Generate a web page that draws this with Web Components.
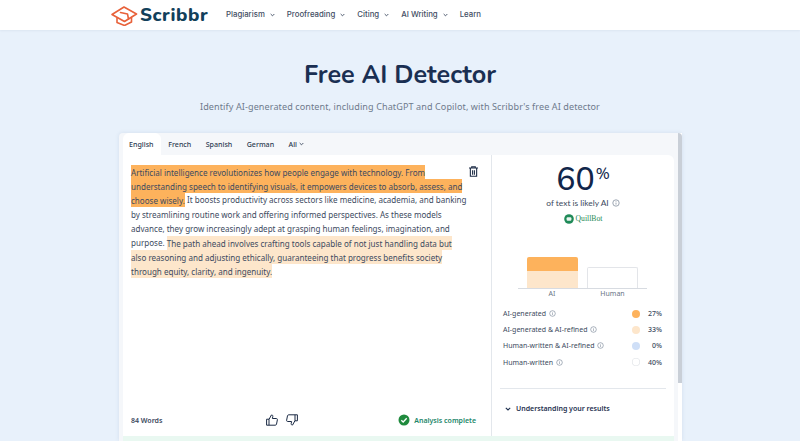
<!DOCTYPE html>
<html>
<head>
<meta charset="utf-8">
<title>Free AI Detector</title>
<style>
  html, body { margin: 0; height: 441px; overflow: hidden; background: #e8f1fb; font-family: "Open Sans", sans-serif; }
</style>
</head>
<body>
<site-header></site-header>
<detector-page></detector-page>

<script>
const infoIcon = (size) => `<svg width="${size}" height="${size}" viewBox="0 0 12 12" fill="none" stroke="#6c7a8d" stroke-width="1"><circle cx="6" cy="6" r="4.8"/><path d="M6 5.4v3M6 3.4v1"/></svg>`;

class SiteHeader extends HTMLElement {
    constructor() {
        super();
        this.attachShadow({ mode: 'open' });
    }
    connectedCallback() {
        const links = [['Plagiarism', 1], ['Proofreading', 1], ['Citing', 1], ['AI Writing', 1], ['Learn', 0]];
        this.shadowRoot.innerHTML = `
            <style>
                :host { display: flex; align-items: center; height: 30px; background: #fff; padding-left: 111px; box-sizing: border-box; box-shadow: 0 1px 2px rgba(30,50,80,.06); position: relative; }
                .logo { display: flex; align-items: center; gap: 2px; width: 115px; }
                .word { font: 800 18.7px/1 "Nunito", "Lato", sans-serif; color: #12405a; letter-spacing: .6px; }
                nav { display: flex; gap: 12px; font: 500 7.8px/1 Inter, sans-serif; color: #3f4d63; }
                a { display: flex; align-items: center; gap: 5px; }
            </style>
            <div class="logo">
                <svg width="27" height="21" viewBox="0 0 27 21" fill="none" stroke="#e8613a" stroke-width="1.6" stroke-linejoin="round" stroke-linecap="round">
                    <path d="M1 9.5 13 2l12.5 7-12 7.5z"/>
                    <path d="M6 13v4.500l7.500 3 7-3.500v-4.500"/>
                    <path d="M9.500 7.500l7 1.500 1 5"/>
                </svg>
                <span class="word">Scribbr</span>
            </div>
            <nav>${links.map(([t, c]) => `<a>${t}${c ? '<svg width="5" height="4" viewBox="0 0 6 4" fill="none" stroke="#3f4d63" stroke-width="1.100"><path d="M.8.8 3 3 5.200.8"/></svg>' : ''}</a>`).join('')}</nav>
        `;
    }
}

class EditorPane extends HTMLElement {
    constructor() {
        super();
        this.attachShadow({ mode: 'open' });
    }
    connectedCallback() {
        this.shadowRoot.innerHTML = `
            <style>
                :host { display: flex; flex-direction: column; width: 368px; box-sizing: border-box; padding: 10px 15px 0 8px; position: relative; color: #3c4a60; }
                p { margin: 0; font: 400 8.05px/14.2px "Noto Sans", sans-serif; width: 337px; color: #3c4a60; }
                .a { background: #fdb25c; padding: 1.500px 0; }
                .b { background: #fde6cb; padding: 1.500px 0; }
                .trash { position: absolute; top: 11px; left: 346px; }
                footer { margin-top: auto; display: flex; align-items: center; height: 24px; margin-bottom: 4px; font: 600 7px/1 "Noto Sans", sans-serif; }
                .words { width: 0; white-space: nowrap; color: #3c4a60; }
                .thumbs { display: flex; gap: 3px; margin-left: 135px; }
                .status { display: flex; align-items: center; gap: 4px; margin-left: auto; color: #23866a; }
            </style>
            <p><span class="a">Artificial intelligence revolutionizes how people engage with technology. From understanding speech to identifying visuals, it empowers devices to absorb, assess, and choose wisely.</span> It boosts productivity across sectors like medicine, academia, and banking by streamlining routine work and offering informed perspectives. As these models advance, they grow increasingly adept at grasping human feelings, imagination, and purpose. <span class="b">The path ahead involves crafting tools capable of not just handling data but also reasoning and adjusting ethically, guaranteeing that progress benefits society through equity, clarity, and ingenuity.</span></p>
            <svg class="trash" width="9" height="11" viewBox="0 0 10 12" fill="none" stroke="#1c2b45" stroke-width="1.200"><path d="M0 2.200h10M3 2V.8h4V2M1.500 2.500v8.700h7V2.500M4 4.500v5M6 4.500v5"/></svg>
            <footer>
                <span class="words">84 Words</span>
                <span class="thumbs">
                    <svg width="12" height="12" viewBox="0 0 12 12" fill="none" stroke="#1c2b45" stroke-width="1" stroke-linejoin="round"><path d="M.6 5.200h2.400v6H.6zM3 5.400 5.400 1c1-.2 1.600.5 1.400 1.500L6.400 4.500h4c.7 0 1.100.6 1 1.200l-.9 4.500c-.1.600-.6 1-1.200 1H3"/></svg>
                    <svg width="12" height="12" viewBox="0 0 12 12" fill="none" stroke="#1c2b45" stroke-width="1" stroke-linejoin="round" style="margin-left:5px"><path d="M11.400 6.800H9v-6h2.400zM9 6.600 6.600 11c-1 .2-1.600-.5-1.400-1.500l.4-2h-4c-.7 0-1.100-.6-1-1.200l.9-4.500c.1-.6.6-1 1.200-1H9"/></svg>
                </span>
                <span class="status">
                    <svg width="12" height="12" viewBox="0 0 12 12"><circle cx="6" cy="6" r="5.500" fill="#1f8a3d"/><path d="M3.300 6.200 5.200 8l3.500-3.800" fill="none" stroke="#fff" stroke-width="1.300"/></svg>
                    Analysis complete
                </span>
            </footer>
        `;
    }
}

class ResultsPane extends HTMLElement {
    constructor() {
        super();
        this.attachShadow({ mode: 'open' });
    }
    connectedCallback() {
        const rows = [
            ['AI-generated', '#fdb25c', '27%'],
            ['AI-generated &amp; AI-refined', '#fde6cb', '33%'],
            ['Human-written &amp; AI-refined', '#cfdff7', '0%'],
            ['Human-written', '#fff', '40%']
        ];
        this.shadowRoot.innerHTML = `
            <style>
                :host { display: flex; flex-direction: column; flex: 1; border-left: 1px solid #e3e7ec; box-sizing: border-box; color: #3c4a60; font-family: "Noto Sans", sans-serif; }
                .score { text-align: center; font: 500 32px/1 "Nunito", "Lato", sans-serif; color: #11264a; margin-top: 9px; height: 33px; }
                .score sup { font-size: 15px; font-weight: 500; vertical-align: 11px; line-height: 0; margin-left: 1px; }
                .likely { display: flex; justify-content: center; align-items: center; gap: 3px; margin-top: 2px; font: 400 8.400px/1 Lato, sans-serif; }
                .quill { display: flex; justify-content: center; align-items: center; gap: 2px; margin-top: 7px; font: 400 7.700px/10px "Liberation Serif", serif; color: #1f8a58; }
                .chart { margin: 33px 0 0 26px; width: 129px; height: 32px; display: flex; align-items: flex-end; gap: 9.500px; padding-left: 8.500px; box-sizing: border-box; border-bottom: 1px solid #d7dbe1; }
                .bar { width: 51px; border-radius: 2px 2px 0 0; box-sizing: border-box; display: flex; flex-direction: column; }
                .bar.ai { height: 31px; }
                .bar.ai i { display: block; height: 14px; background: #fdb25c; border-radius: 2px 2px 0 0; }
                .bar.ai b { display: block; height: 17px; background: #fde6cb; }
                .bar.human { height: 21px; border: 1px solid #e3e5e9; border-bottom: 0; background: #fff; }
                .labels { display: flex; width: 129px; margin-left: 26px; padding-left: 8.500px; box-sizing: border-box; gap: 9.500px; font: 400 7px/1 "Noto Sans", sans-serif; color: #6a7585; margin-top: 1px; }
                .labels span { width: 51px; text-align: center; }
                ul { list-style: none; margin: 8px 0 0; padding: 0 12px 0 11px; }
                li { display: flex; align-items: center; height: 16.200px; font: 400 7px/1 "Noto Sans", sans-serif; gap: 3px; }
                li .dot { width: 8px; height: 8px; border-radius: 50%; margin-left: auto; }
                li .dot.w { box-shadow: inset 0 0 0 .6px #dfe2e6; }
                li .pct { width: 19px; text-align: right; font-weight: 500; }
                hr { border: 0; border-top: 1px solid #e3e7ec; margin: 18px 8px 0; }
                .more { display: flex; align-items: center; gap: 5px; margin: 16px 0 0 13px; font: 600 7px/1 "Noto Sans", sans-serif; color: #1f3150; }
            </style>
            <div class="score">60<sup>%</sup></div>
            <div class="likely">of text is likely AI ${infoIcon(8)}</div>
            <div class="quill">
                <svg width="10" height="10" viewBox="0 0 10 10"><circle cx="5" cy="5" r="4.800" fill="#1f8a58"/><rect x="2.600" y="3.200" width="4.800" height="3.600" rx="1" fill="#e8f5ee"/></svg>
                QuillBot
            </div>
            <div class="chart">
                <div class="bar ai"><i></i><b></b></div>
                <div class="bar human"></div>
            </div>
            <div class="labels"><span>AI</span><span>Human</span></div>
            <ul>${rows.map(([t, c, p]) => `<li>${t} ${infoIcon(7)}<span class="dot ${c === '#fff' ? 'w' : ''}" style="background:${c}"></span><span class="pct">${p}</span></li>`).join('')}</ul>
            <hr>
            <div class="more">
                <svg width="6" height="4" viewBox="0 0 6 4" fill="none" stroke="#1f3150" stroke-width="1.100"><path d="M.8.8 3 3 5.200.8"/></svg>
                Understanding your results
            </div>
        `;
    }
}

class DetectorCard extends HTMLElement {
    constructor() {
        super();
        this.attachShadow({ mode: 'open' });
    }
    connectedCallback() {
        this.shadowRoot.innerHTML = `
            <style>
                :host { display: block; width: 563px; height: 308px; margin-left: 119px; margin-top: 20px; background: #f5f7fa; border-radius: 4px 4px 0 0; box-sizing: border-box; padding: 0 8px 0 4px; position: relative; box-shadow: 0 0 4px rgba(60,90,130,.12); }
                .tabs { display: flex; height: 22px; align-items: stretch; font: 500 7.100px/22px "Noto Sans", sans-serif; color: #2d3b52; }
                .tabs span { padding: 0 7.200px; }
                .tabs .on { background: #fff; border-radius: 6px 6px 0 0; padding: 0 7.500px 0 6px; }
                .tabs .all { display: flex; align-items: center; gap: 2px; }
                .panel { display: flex; height: 281px; background: #fff; border-radius: 0 6px 0 0; }
                .green { position: absolute; left: 4px; right: 8px; top: 303px; height: 5px; background: #e9f8f1; }
                .track { position: absolute; right: 0; top: 0; bottom: 0; width: 4px; background: #fff; }
                .thumb { height: 250px; background: #c9cfd7; border-radius: 0 4px 0 0; }
            </style>
            <div class="tabs">
                <span class="on">English</span><span>French</span><span>Spanish</span><span>German</span>
                <span class="all">All <svg width="5" height="4" viewBox="0 0 6 4" fill="none" stroke="#2d3b52" stroke-width="1"><path d="M.8.800 3 3 5.200.800"/></svg></span>
            </div>
            <div class="panel"><slot></slot></div>
            <div class="green"></div>
            <div class="track"><div class="thumb"></div></div>
        `;
    }
}

class DetectorPage extends HTMLElement {
    constructor() {
        super();
        this.attachShadow({ mode: 'open' });
    }
    connectedCallback() {
        this.shadowRoot.innerHTML = `
            <style>
                :host { display: block; }
                h1 { margin: 30px 0 0; text-align: center; font: 700 25.200px/30px "Nunito", "Lato", sans-serif; color: #1a2f52; }
                .sub { margin: 10px 0 0; text-align: center; font: 400 9.050px/13px "Noto Sans", sans-serif; color: #6e7a8c; letter-spacing: .1px; }
            </style>
            <h1>Free AI Detector</h1>
            <p class="sub">Identify AI-generated content, including ChatGPT and Copilot, with Scribbr's free AI detector</p>
            <detector-card><editor-pane></editor-pane><results-pane></results-pane></detector-card>
        `;
    }
}

customElements.define('site-header', SiteHeader);
customElements.define('editor-pane', EditorPane);
customElements.define('results-pane', ResultsPane);
customElements.define('detector-card', DetectorCard);
customElements.define('detector-page', DetectorPage);
</script>
</body>
</html>
